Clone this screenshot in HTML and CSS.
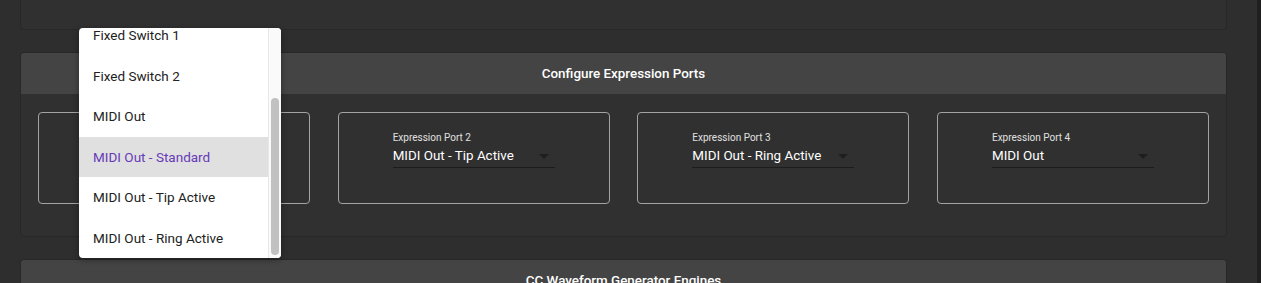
FILE: index.html
```html
<!DOCTYPE html>
<html lang="en">
<head>
  <meta charset="UTF-8" />
  <meta name="viewport" content="width=device-width, initial-scale=1.0"/>
  <title>Expression Ports</title>
  <link rel="stylesheet" href="styles.css">
</head>
<body>

  <main class="page">
    <!-- previous section, scrolled mostly out of view -->
    <section class="card card-top"></section>

    <section class="card">
      <h2 class="card-header">Configure Expression Ports</h2>
      <div class="card-body ports">
        <div class="port-box">
          <div class="field">
            <label class="field-label">Expression Port 1</label>
            <div class="field-select">
              <span class="field-value">MIDI Out - Standard</span>
              <span class="arrow"></span>
            </div>
          </div>
        </div>
        <div class="port-box">
          <div class="field">
            <label class="field-label">Expression Port 2</label>
            <div class="field-select">
              <span class="field-value">MIDI Out - Tip Active</span>
              <span class="arrow"></span>
            </div>
          </div>
        </div>
        <div class="port-box">
          <div class="field">
            <label class="field-label">Expression Port 3</label>
            <div class="field-select">
              <span class="field-value">MIDI Out - Ring Active</span>
              <span class="arrow"></span>
            </div>
          </div>
        </div>
        <div class="port-box">
          <div class="field">
            <label class="field-label">Expression Port 4</label>
            <div class="field-select">
              <span class="field-value">MIDI Out</span>
              <span class="arrow"></span>
            </div>
          </div>
        </div>
      </div>
    </section>

    <section class="card">
      <h2 class="card-header">CC Waveform Generator Engines</h2>
    </section>
  </main>

  <!-- open select menu for port 1 -->
  <div class="menu">
    <ul class="menu-list">
      <li>Fixed Switch 1</li>
      <li>Fixed Switch 2</li>
      <li>MIDI Out</li>
      <li class="selected">MIDI Out - Standard</li>
      <li>MIDI Out - Tip Active</li>
      <li>MIDI Out - Ring Active</li>
    </ul>
    <div class="menu-scroll"><div class="menu-thumb"></div></div>
  </div>

  <div class="page-scrollbar"></div>

</body>
</html>
```

FILE: styles.css
```css
body {
  font-family: 'Roboto', 'Liberation Sans', sans-serif;
  margin: 0;
  padding: 0;
  background-color: #2e2e2e;
  height: 283px;
  overflow: hidden;
}

.page {
  width: 1207px;
  margin-left: 20px;
  display: flex;
  flex-direction: column;
  gap: 22px;
}

.card {
  background-color: #303030;
  border: 1px solid #282828;
  border-radius: 4px;
  overflow: hidden;
}

.card-top {
  height: 30px;
  border-top: none;
  border-radius: 0 0 4px 4px;
  box-sizing: border-box;
}

.card-header {
  margin: 0;
  height: 41px;
  background-color: #444;
  color: #fff;
  font-size: 13.4px;
  font-weight: 500;
  text-align: center;
  line-height: 41px;
}

.ports {
  display: flex;
  justify-content: space-between;
  padding: 18px 17px 32px;
}

.port-box {
  width: 272px;
  height: 92px;
  box-sizing: border-box;
  border: 1px solid #a3a3a3;
  border-radius: 4px;
  display: flex;
  justify-content: center;
}

.field {
  width: 162px;
  margin-top: 19px;
}

.field-label {
  display: block;
  font-size: 10px;
  color: #e0e0e0;
  line-height: 12px;
}

.field-select {
  position: relative;
  height: 24px;
  padding-bottom: 1px;
  box-sizing: border-box;
  border-bottom: 1px solid #1c1c1c;
  display: flex;
  align-items: center;
}

.field-value {
  color: #fff;
  font-size: 13.4px;
}

.arrow {
  position: absolute;
  right: 6px;
  top: 10px;
  border-left: 5px solid transparent;
  border-right: 5px solid transparent;
  border-top: 5px solid #1e1e1e;
}

.menu {
  position: absolute;
  left: 79px;
  top: 28px;
  width: 202px;
  height: 230px;
  background-color: #fff;
  border-radius: 4px;
  overflow: hidden;
  box-shadow: 0 2px 6px rgba(0, 0, 0, 0.35);
}

.menu-list {
  list-style: none;
  margin: -13px 0 0;
  padding: 0;
  width: 189px;
}

.menu-list li {
  height: 40.5px;
  line-height: 41px;
  padding-left: 14px;
  font-size: 13.5px;
  color: #222;
}

.menu-list li.selected {
  background-color: #e0e0e0;
  color: #673ab7;
}

.menu-scroll {
  position: absolute;
  right: 0;
  top: 0;
  width: 13px;
  height: 100%;
  background-color: #fafafa;
  border-left: 1px solid #e8e8e8;
  box-sizing: border-box;
}

.menu-thumb {
  position: absolute;
  left: 2px;
  top: 70px;
  width: 8px;
  height: 157px;
  border-radius: 4px;
  background-color: #c1c1c1;
}

.page-scrollbar {
  position: absolute;
  right: 0;
  top: 0;
  width: 4px;
  height: 283px;
  background-color: #1f1f1f;
}
```
